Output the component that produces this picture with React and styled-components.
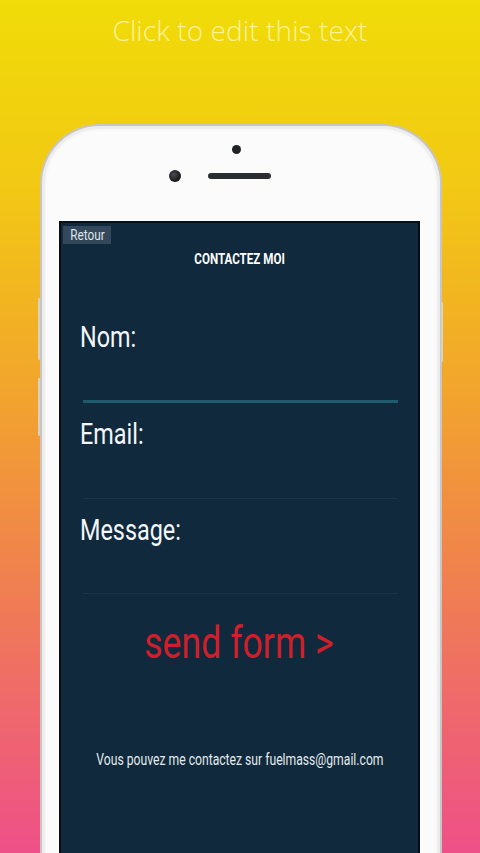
import React from "react";
import styled, { createGlobalStyle } from "styled-components";

const Global = createGlobalStyle`
  html, body { margin: 0; padding: 0; }
  body { font-family: Roboto, "Liberation Sans", sans-serif; }
`;

const Page = styled.div`
  width: 480px;
  height: 853px;
  overflow: hidden;
  display: flex;
  flex-direction: column;
  align-items: center;
  background: linear-gradient(
    180deg,
    #f0dc08 0%,
    #f2c814 22%,
    #f2a62c 45%,
    #f0854a 65%,
    #ef6a6a 82%,
    #ee5088 100%
  );
`;

const Title = styled.h1`
  margin: 10px 0 0;
  height: 40px;
  font-family: "Open Sans", sans-serif;
  font-weight: 300;
  font-size: 28px;
  line-height: 40px;
  color: rgba(255, 252, 200, 0.75);
  letter-spacing: 0.1px;
`;

const Phone = styled.div`
  position: relative;
  margin-top: 74px;
  margin-left: 2px;
  width: 402px;
  height: 760px;
  flex-shrink: 0;
  box-sizing: border-box;
  background: #fbfbfb;
  border: 2px solid #c7c6c4;
  border-bottom: none;
  border-radius: 60px 60px 0 0;
  box-shadow: inset 0 0 0 3px #ededed, inset 0 0 0 5px #f8f8f8;
  padding: 0 20px 0 17px;
  display: flex;
  flex-direction: column;
`;

const SideButton = styled.div`
  position: absolute;
  ${(p) => (p.$right ? "right: -3px;" : "left: -4px;")}
  top: ${(p) => p.$top}px;
  height: ${(p) => p.$h}px;
  width: 2px;
  background: #d8d2c0;
  border-radius: 1px;
`;

const TopBezel = styled.div`
  height: 95px;
  display: flex;
  flex-direction: column;
  align-items: center;
`;

const Sensor = styled.div`
  margin-top: 19px;
  margin-right: 6px;
  width: 9px;
  height: 9px;
  border-radius: 50%;
  background: #202224;
`;

const EarRow = styled.div`
  margin-top: 16px;
  margin-right: 40px;
  display: flex;
  align-items: center;
  gap: 27px;
`;

const FrontCam = styled.div`
  width: 12px;
  height: 12px;
  border-radius: 50%;
  background: radial-gradient(circle at 40% 40%, #4a4d52 0%, #1b1c1e 60%);
`;

const Speaker = styled.div`
  width: 63px;
  height: 6px;
  border-radius: 3px;
  background: #2c2e30;
`;

const Screen = styled.div`
  width: 361px;
  flex: 1;
  box-sizing: border-box;
  background: #10293c;
  border: 2px solid #060f16;
  border-bottom: none;
  display: flex;
  flex-direction: column;
  color: #f2f6f8;
  padding: 3px 0 0 2px;
`;

/* the app's text is a narrow face: Roboto squeezed horizontally */
const Narrow = styled.span`
  display: inline-block;
  flex-shrink: 0;
  white-space: nowrap;
  transform: scaleX(${(p) => p.$scale || 0.78});
  transform-origin: ${(p) => p.$origin || "center"};
`;

const BackButton = styled.button`
  align-self: flex-start;
  width: 48px;
  height: 18px;
  padding: 0;
  border: none;
  background: #33485a;
  color: #dfe5ea;
  font-family: Roboto, sans-serif;
  font-size: 14px;
  line-height: 18px;
  display: flex;
  justify-content: center;
  overflow: hidden;
`;

const CenteredLine = styled.div`
  display: flex;
  justify-content: center;
  padding-right: 2px;
`;

const Heading = styled(CenteredLine)`
  margin-top: 7px;
  font-size: 14.5px;
  font-weight: 700;
  line-height: 18px;
  color: #ffffff;
`;

const Form = styled.div`
  margin-top: 51px;
  padding: 0 20px 0 17px;
  display: flex;
  flex-direction: column;
`;

const Field = styled.div`
  display: flex;
  flex-direction: column;
`;

const Label = styled.div`
  height: 34px;
  font-size: 30px;
  line-height: 34px;
  color: #f3f7f9;
`;

const Underline = styled.div`
  margin: ${(p) => p.$gap}px 0 14px 3px;
  height: ${(p) => (p.$active ? "3px" : "1px")};
  background: ${(p) => (p.$active ? "#1e5b6c" : "#1a3449")};
`;

const SendButton = styled(CenteredLine)`
  margin-top: 10px;
  font-size: 44px;
  line-height: 50px;
  color: #cf1f2b;
  padding-right: 4px;
  cursor: pointer;
`;

const Footer = styled(CenteredLine)`
  margin-top: 82px;
  font-size: 16px;
  line-height: 20px;
  color: #e3e9ed;
`;

export default function App() {
  return (
    <>
      <Global />
      <Page>
        <Title>Click to edit this text</Title>
        <Phone>
          <SideButton $top={172} $h={62} />
          <SideButton $top={252} $h={58} />
          <SideButton $right $top={176} $h={60} />
          <TopBezel>
            <Sensor />
            <EarRow>
              <FrontCam />
              <Speaker />
            </EarRow>
          </TopBezel>
          <Screen>
            <BackButton>
              <Narrow $scale={0.84}>Retour</Narrow>
            </BackButton>
            <Heading>
              <Narrow $scale={0.8}>CONTACTEZ MOI</Narrow>
            </Heading>
            <Form>
              <Field>
                <Label>
                  <Narrow $origin="left">Nom:</Narrow>
                </Label>
                <Underline $active $gap={46} />
              </Field>
              <Field>
                <Label>
                  <Narrow $origin="left">Email:</Narrow>
                </Label>
                <Underline $gap={47} />
              </Field>
              <Field>
                <Label>
                  <Narrow $origin="left">Message:</Narrow>
                </Label>
                <Underline $gap={46} />
              </Field>
            </Form>
            <SendButton>
              <Narrow $scale={0.81}>send form &gt;</Narrow>
            </SendButton>
            <Footer>
              <Narrow $scale={0.76}>
                Vous pouvez me contactez sur fuelmass@gmail.com
              </Narrow>
            </Footer>
          </Screen>
        </Phone>
      </Page>
    </>
  );
}
